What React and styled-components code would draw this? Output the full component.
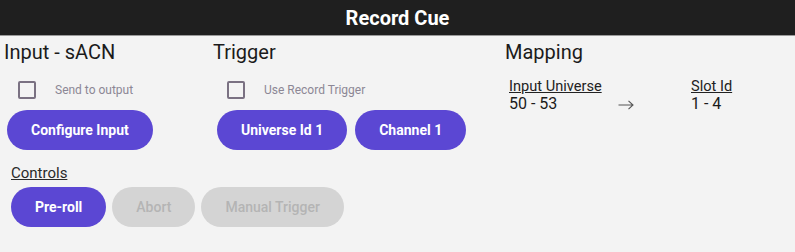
import styled, { createGlobalStyle } from "styled-components";

const GlobalStyle = createGlobalStyle`
  body {
    margin: 0;
    background: #f3f3f3;
    font-family: Roboto, "Liberation Sans", sans-serif;
  }
`;

const Page = styled.div`
  width: 795px;
  height: 252px;
  background: #f3f3f3;
  overflow: hidden;
`;

const Header = styled.header`
  height: 35px;
  background: #1f1f1f;
  border-bottom: 1px solid #9a9a9a;
  color: #ffffff;
  font-size: 20px;
  font-weight: bold;
  display: flex;
  align-items: center;
  justify-content: center;
`;

const Sections = styled.div`
  display: grid;
  grid-template-columns: 209px 292px 1fr;
  padding: 4px 0 0 4px;
`;

const Section = styled.section`
  display: flex;
  flex-direction: column;
`;

const Heading = styled.h2`
  margin: 0;
  font-size: 20px;
  font-weight: 400;
  line-height: 24px;
  color: #1b1b1b;
`;

const CheckRow = styled.label`
  display: flex;
  align-items: center;
  gap: 19px;
  margin: 17px 0 0 14px;
  font-size: 12px;
  color: #8c8795;
`;

const Box = styled.span`
  width: 18px;
  height: 18px;
  box-sizing: border-box;
  border: 2px solid #7a7182;
  border-radius: 2px;
`;

const ButtonRow = styled.div`
  display: flex;
  gap: ${(p) => p.$gap || 8}px;
  margin: ${(p) => p.$margin || "0"};
`;

const Button = styled.button`
  height: 40px;
  padding: 0 24px;
  border: none;
  border-radius: 20px;
  font-family: Roboto, "Liberation Sans", sans-serif;
  font-size: 14px;
  background: ${(p) => (p.disabled ? "#d4d4d4" : "#5b47d3")};
  color: ${(p) => (p.disabled ? "#b4b4b4" : "#ffffff")};
  font-weight: ${(p) => (p.disabled ? 500 : 700)};
`;

const MappingGrid = styled.div`
  display: grid;
  grid-template-columns: 109px 73px auto;
  margin: 14px 0 0 4px;
  align-items: end;
`;

const MapLabel = styled.div`
  font-size: 14.6px;
  color: #222;
  text-decoration: underline;
  line-height: 16px;
`;

const MapValue = styled.div`
  font-size: 16px;
  color: #1b1b1b;
  line-height: 19px;
`;

const Arrow = styled.svg`
  width: 16px;
  height: 10px;
  margin-bottom: 3px;
  fill: none;
  stroke: #555;
  stroke-width: 1.1;
`;

const Controls = styled.div`
  padding: 15px 0 0 11px;
`;

const ControlsLabel = styled.div`
  font-size: 15px;
  color: #2a2a2a;
  text-decoration: underline;
  line-height: 16px;
  margin-bottom: 6px;
`;

export default function App() {
  return (
    <Page>
      <GlobalStyle />
      <Header>Record Cue</Header>
      <Sections>
        <Section>
          <Heading>Input - sACN</Heading>
          <CheckRow>
            <Box />
            Send to output
          </CheckRow>
          <ButtonRow $margin="11px 0 0 3px">
            <Button>Configure Input</Button>
          </ButtonRow>
        </Section>
        <Section>
          <Heading>Trigger</Heading>
          <CheckRow>
            <Box />
            Use Record Trigger
          </CheckRow>
          <ButtonRow $margin="11px 0 0 4px">
            <Button>Universe Id 1</Button>
            <Button>Channel 1</Button>
          </ButtonRow>
        </Section>
        <Section>
          <Heading>Mapping</Heading>
          <MappingGrid>
            <MapLabel>Input Universe</MapLabel>
            <span />
            <MapLabel>Slot Id</MapLabel>
            <MapValue>50 - 53</MapValue>
            <Arrow viewBox="0 0 16 10">
              <path d="M0.5 5h14.5M10.5 0.8L15 5l-4.5 4.2" />
            </Arrow>
            <MapValue>1 - 4</MapValue>
          </MappingGrid>
        </Section>
      </Sections>
      <Controls>
        <ControlsLabel>Controls</ControlsLabel>
        <ButtonRow $gap={6}>
          <Button>Pre-roll</Button>
          <Button disabled>Abort</Button>
          <Button disabled>Manual Trigger</Button>
        </ButtonRow>
      </Controls>
    </Page>
  );
}
